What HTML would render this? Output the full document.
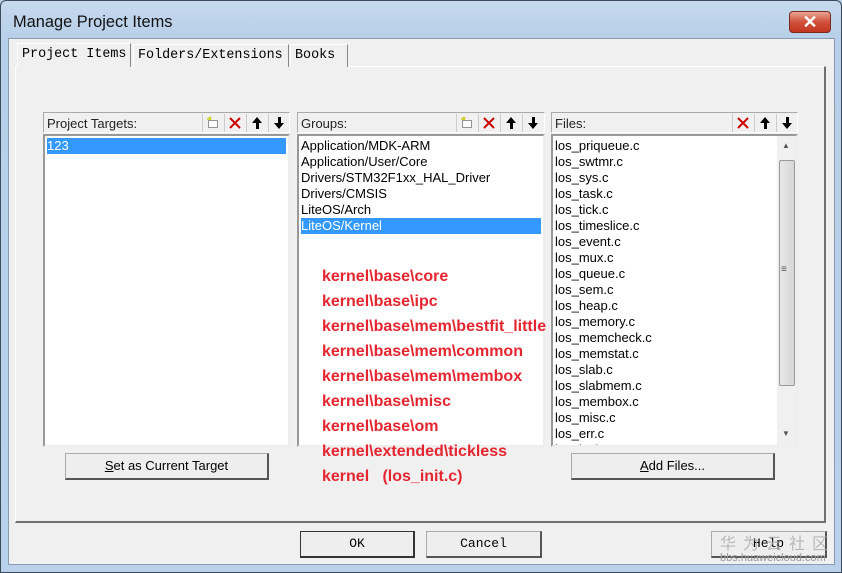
<!DOCTYPE html>
<html><head><style>
*{margin:0;padding:0;box-sizing:border-box}
html,body{width:842px;height:573px;overflow:hidden}
body{position:relative;background:#b9d1ea;font-family:"Liberation Sans",sans-serif}
.abs{position:absolute}
.win{left:0;top:0;width:842px;height:573px;border:1px solid #3c4a5a;border-radius:6px 6px 0 0;background:linear-gradient(#c6d9ee,#b7cfe8 38px,#b9d1ea)}
.title{left:13px;top:13px;font-size:16.4px;color:#111;font-family:"Liberation Sans",sans-serif}
.close{left:789px;top:11px;width:42px;height:22px;border:1px solid #7a2b20;border-radius:4px;background:linear-gradient(#e9a596,#d0503a 50%,#c2361f);color:#fff;font-size:18px;font-weight:bold;text-align:center;line-height:20px}
.client{left:8px;top:38px;width:827px;height:527px;background:#f0f0f0;border:1px solid #8a9bb0}
.mono{font-family:"Liberation Mono",monospace;font-size:13.4px;color:#000}
.tab{top:44px;height:23px;border:1px solid #fff;border-right:1px solid #888;border-bottom:none;background:#f0f0f0;padding:3px 4px;white-space:nowrap}
.panel{left:15px;top:66px;width:811px;height:457px;border:1px solid #fff;border-right:2px solid #707070;border-bottom:2px solid #707070}
.hdr{height:21px;border:1px solid #aaa;border-right-color:#fff;border-bottom-color:#fff;background:#f0f0f0;font-size:13px;color:#222;padding:3px 3px}
.list{background:#fff;border:2px solid #999;border-right-color:#eee;border-bottom-color:#eee;font-size:13px;line-height:16px;padding:2px 2px;color:#000;overflow:hidden}
.sel{background:#3399ff;color:#fff}
.btn{height:27px;border:1px solid #aaa;border-right:2px solid #555;border-bottom:2px solid #555;background:#eee;text-align:center;font-size:13px;line-height:24px}
.red{left:0;font-size:16px;font-weight:bold;color:#e52530;white-space:nowrap;letter-spacing:0px}
.ic{top:114px;width:21px;height:18px;border-left:1px solid #ccc}
.ic svg{display:block;margin:2px auto}
</style></head><body>
<div class="abs win"></div>
<div class="abs title">Manage Project Items</div>
<div class="abs close">✕</div>
<div class="abs client"></div>
<div class="abs panel"></div>
<div class="abs tab mono" style="left:17px;top:43px;width:114px;height:24px;z-index:2">Project Items</div>
<div class="abs tab mono" style="left:133px;width:156px">Folders/Extensions</div>
<div class="abs tab mono" style="left:290px;width:58px">Books</div>

<div class="abs hdr" style="left:43px;top:112px;width:247px">Project Targets:</div>
<div class="abs list" style="left:43px;top:134px;width:247px;height:313px"><div class="sel">123</div></div>
<div class="abs hdr" style="left:297px;top:112px;width:248px">Groups:</div>
<div class="abs list" style="left:297px;top:134px;width:248px;height:313px">Application/MDK-ARM<br>Application/User/Core<br>Drivers/STM32F1xx_HAL_Driver<br>Drivers/CMSIS<br>LiteOS/Arch<div class="sel">LiteOS/Kernel</div></div>
<div class="abs hdr" style="left:551px;top:112px;width:247px">Files:</div>
<div class="abs list" style="left:551px;top:134px;width:247px;height:313px">los_priqueue.c<br>los_swtmr.c<br>los_sys.c<br>los_task.c<br>los_tick.c<br>los_timeslice.c<br>los_event.c<br>los_mux.c<br>los_queue.c<br>los_sem.c<br>los_heap.c<br>los_memory.c<br>los_memcheck.c<br>los_memstat.c<br>los_slab.c<br>los_slabmem.c<br>los_membox.c<br>los_misc.c<br>los_err.c<br>los_hwi.c</div>
<div class="abs" style="left:777px;top:136px;width:19px;height:309px;background:#f0f0f0"></div>
<div class="abs" style="left:779px;top:160px;width:16px;height:226px;background:linear-gradient(90deg,#e8e8e8,#d6d6d6);border:1px solid #999;border-radius:2px"></div>
<div class="abs" style="left:782px;top:141px;font-size:8px;color:#555">▲</div>
<div class="abs" style="left:782px;top:429px;font-size:8px;color:#555">▼</div>
<div class="abs" style="left:781px;top:264px;font-size:10px;color:#555">≡</div>

<svg width="0" height="0" style="position:absolute"><defs>
<symbol id="n" viewBox="0 0 14 14"><rect x="2.5" y="4.5" width="9" height="7" fill="#fff" stroke="#333" stroke-dasharray="1 1"/><path d="M3 1l1 3M1 3h3M5 1L4 4" stroke="#cc0" stroke-width="1.2"/></symbol>
<symbol id="x" viewBox="0 0 14 14"><path d="M2 2L12 12M12 2L2 12" stroke="#c00" stroke-width="2"/></symbol>
<symbol id="u" viewBox="0 0 14 14"><path d="M7 1L12 7H9V13H6V7H2Z" fill="#000"/></symbol>
<symbol id="d" viewBox="0 0 14 14"><path d="M7 13L12 7H9V1H6V7H2Z" fill="#000"/></symbol>
</defs></svg>
<div class="abs ic" style="left:202px"><svg width="14" height="14"><use href="#n"/></svg></div><div class="abs ic" style="left:224px"><svg width="14" height="14"><use href="#x"/></svg></div><div class="abs ic" style="left:246px"><svg width="14" height="14"><use href="#u"/></svg></div><div class="abs ic" style="left:268px"><svg width="14" height="14"><use href="#d"/></svg></div>
<div class="abs ic" style="left:456px"><svg width="14" height="14"><use href="#n"/></svg></div><div class="abs ic" style="left:478px"><svg width="14" height="14"><use href="#x"/></svg></div><div class="abs ic" style="left:500px"><svg width="14" height="14"><use href="#u"/></svg></div><div class="abs ic" style="left:522px"><svg width="14" height="14"><use href="#d"/></svg></div>
<div class="abs ic" style="left:732px"><svg width="14" height="14"><use href="#x"/></svg></div><div class="abs ic" style="left:754px"><svg width="14" height="14"><use href="#u"/></svg></div><div class="abs ic" style="left:776px"><svg width="14" height="14"><use href="#d"/></svg></div>

<div class="abs btn" style="left:65px;top:453px;width:204px"><u>S</u>et as Current Target</div>
<div class="abs btn" style="left:571px;top:453px;width:204px"><u>A</u>dd Files...</div>

<div class="abs" style="left:322px;top:268px;width:229px;height:230px;overflow:hidden">
<div class="abs red" style="top:0">kernel\base\core</div>
<div class="abs red" style="top:25px">kernel\base\ipc</div>
<div class="abs red" style="top:50px">kernel\base\mem\bestfit_little</div>
<div class="abs red" style="top:75px">kernel\base\mem\common</div>
<div class="abs red" style="top:100px">kernel\base\mem\membox</div>
<div class="abs red" style="top:125px">kernel\base\misc</div>
<div class="abs red" style="top:150px">kernel\base\om</div>
<div class="abs red" style="top:175px">kernel\extended\tickless</div>
<div class="abs red" style="top:200px">kernel&nbsp;&nbsp;&nbsp;(los_init.c)</div>
</div>

<div class="abs btn mono" style="left:300px;top:531px;width:115px;border:1px solid #333;border-right:2px solid #333;border-bottom:2px solid #333">OK</div>
<div class="abs btn mono" style="left:426px;top:531px;width:116px">Cancel</div>
<div class="abs btn mono" style="left:711px;top:531px;width:116px">Help</div>
<div class="abs" style="left:720px;top:533px;font-size:16px;line-height:18px;color:#aaa;letter-spacing:7px;white-space:nowrap;font-family:'Noto Sans CJK SC',sans-serif;opacity:.8">华为云社区</div>
<div class="abs" style="left:720px;top:552px;font-size:11px;color:#999;white-space:nowrap">bbs.huaweicloud.com</div>
</body></html>
